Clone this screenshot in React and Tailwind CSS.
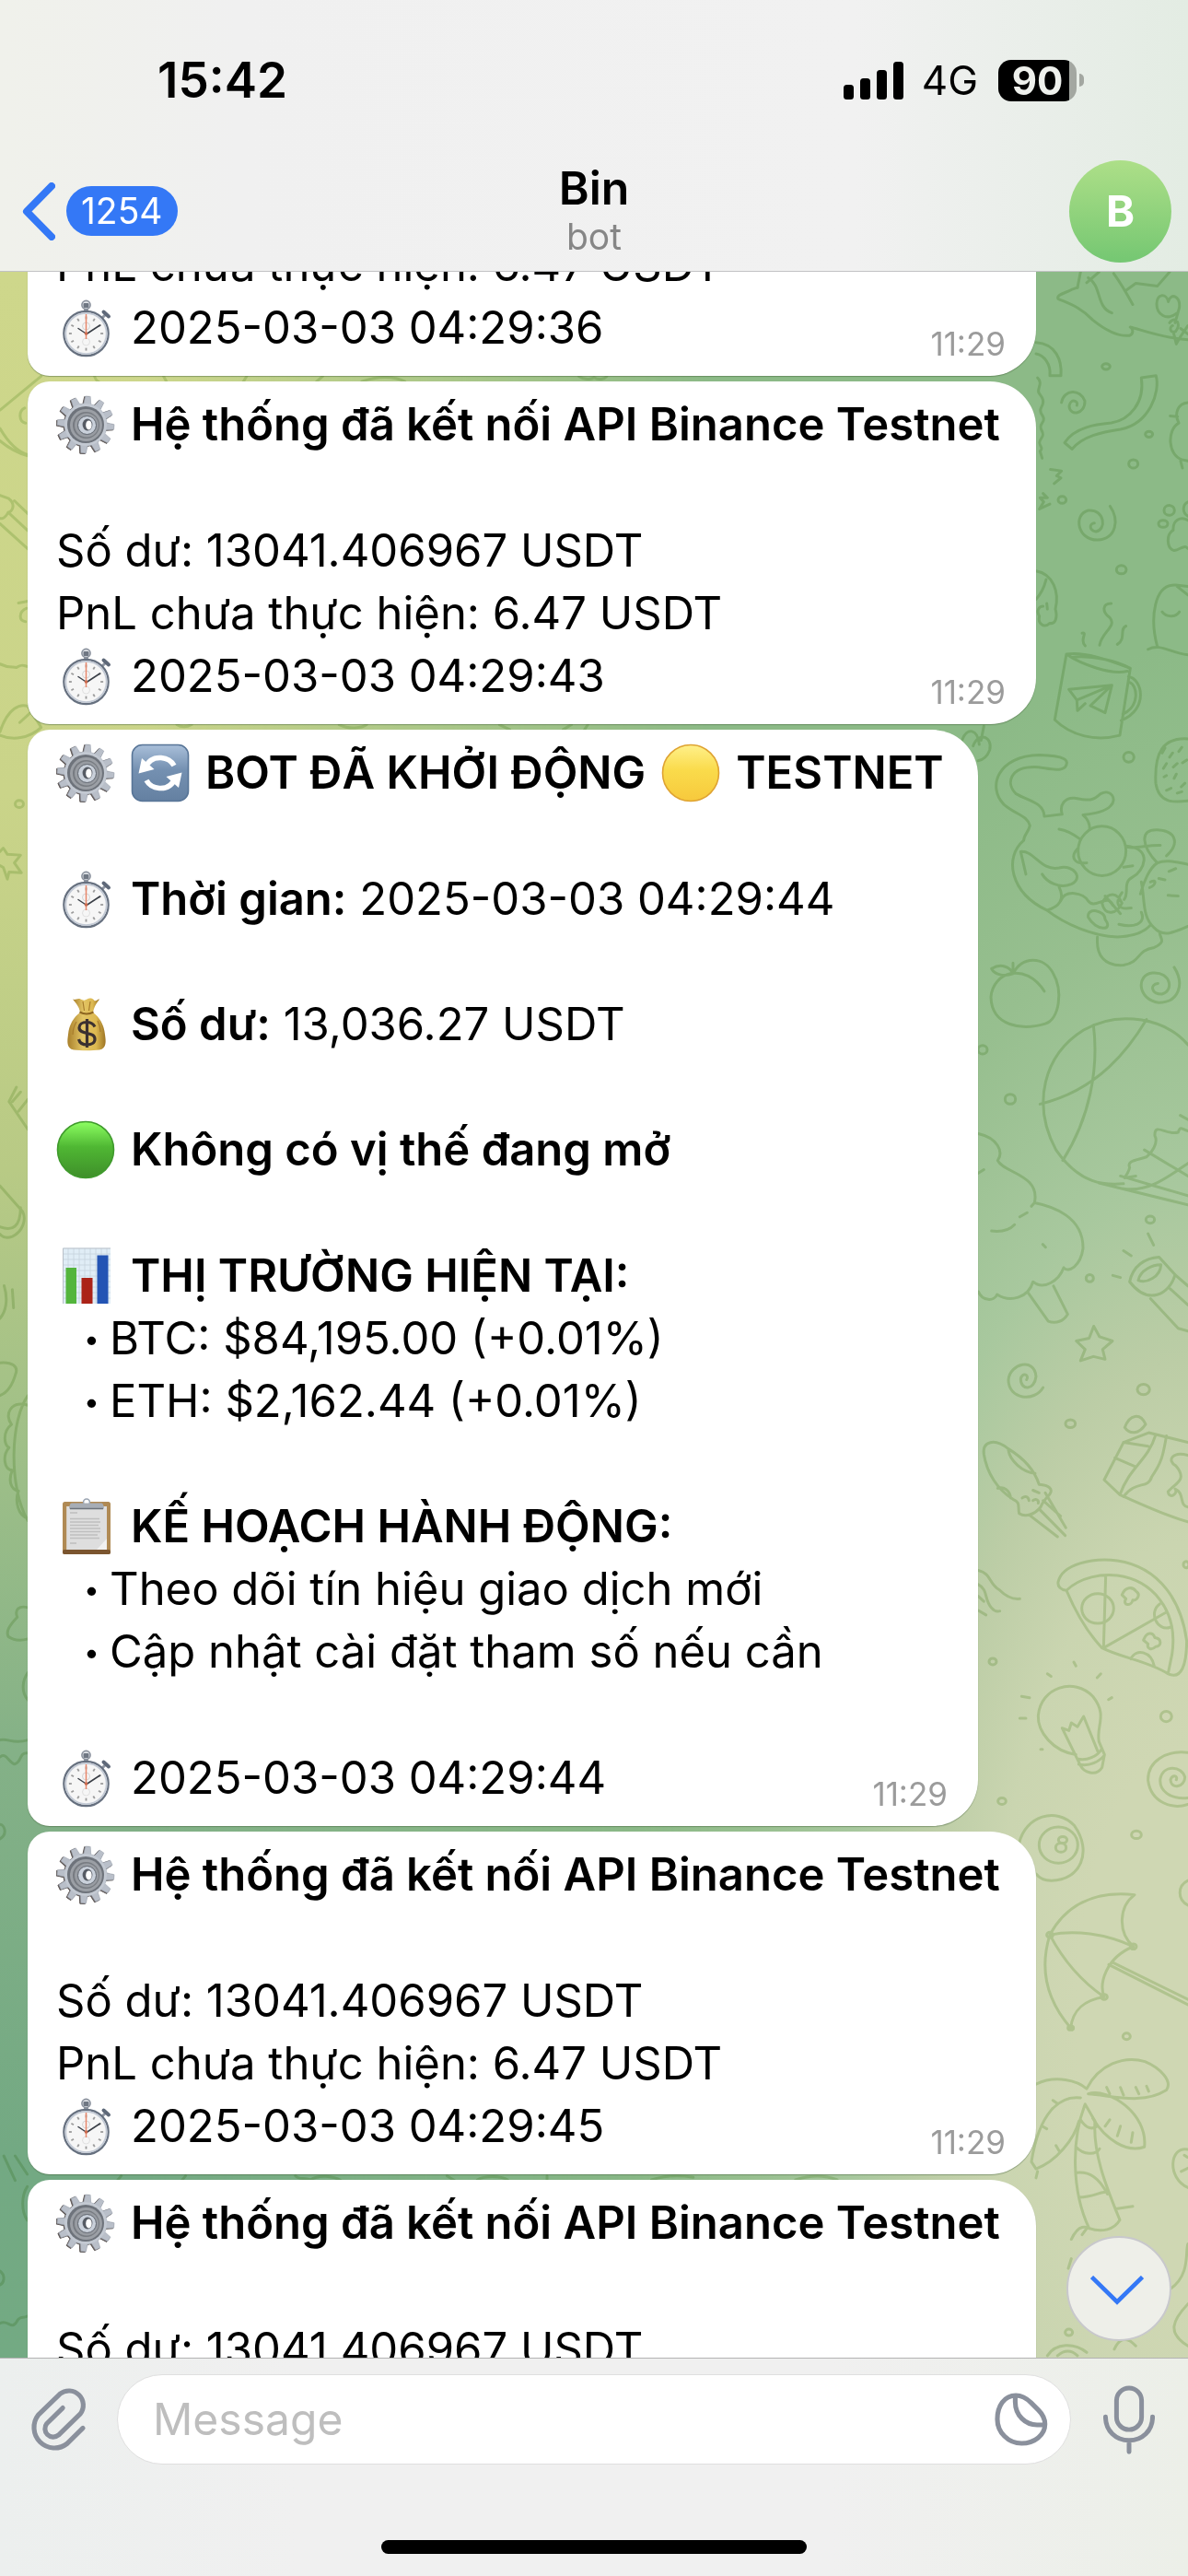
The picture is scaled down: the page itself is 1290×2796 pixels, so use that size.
import { useLayoutEffect, useRef } from "react";

/* ---------- emoji drawings ---------- */

const GEAR_PATH = (() => {
  const teeth = 12;
  const points = [];
  for (let i = 0; i < teeth; i++) {
    const a = (i / teeth) * Math.PI * 2 + 0.08;
    [
      [-0.17, 23],
      [-0.09, 31],
      [0.09, 31],
      [0.17, 23],
    ].forEach(([d, r]) => {
      points.push(`${(32 + Math.sin(a + d) * r).toFixed(1)} ${(32 - Math.cos(a + d) * r).toFixed(1)}`);
    });
  }
  return `M${points.join("L")}Z`;
})();

function EmojiBox({ label, children }) {
  return (
    <svg role="img" aria-label={label} viewBox="0 0 64 64" className="size-16 shrink-0">
      {children}
    </svg>
  );
}

function Gear() {
  return (
    <EmojiBox label="gear">
      <path d={GEAR_PATH} fill="#5d5654" stroke="#5d5654" strokeWidth="1" transform="translate(-1 0.6)" />
      <path d={GEAR_PATH} fill="#b9bfc9" stroke="#9aa1ad" strokeWidth="0.6" strokeLinejoin="round" />
      <circle cx="32" cy="32" r="23" fill="#c3c9d2" />
      <circle cx="32" cy="32" r="20" fill="#6e737b" />
      <circle cx="32.5" cy="32.5" r="17.5" fill="#9b9fa5" />
      <circle cx="32.5" cy="32.5" r="14.5" fill="#777b81" />
      <circle cx="33" cy="32.5" r="13" fill="#989ca2" />
      <circle cx="33.5" cy="32.5" r="10" fill="#c9d0da" stroke="#5f656e" strokeWidth="1" />
      <ellipse cx="34" cy="32" rx="5.4" ry="6.4" fill="#565b64" />
      <ellipse cx="35.4" cy="32.4" rx="3.2" ry="5" fill="#ffffff" />
    </EmojiBox>
  );
}

const WATCH_TICKS = Array.from({ length: 12 }, (_, i) => i * 30);

function Stopwatch() {
  return (
    <EmojiBox label="stopwatch">
      <rect x="30" y="8" width="5" height="8" fill="#8f96a1" />
      <circle cx="32.5" cy="7" r="4.6" fill="#e4e7eb" stroke="#8a919d" strokeWidth="1.6" />
      <rect x="29.5" y="5" width="6" height="5" rx="1" fill="#6f7783" />
      <path d="M49 22l5-5" stroke="#8f96a1" strokeWidth="3" />
      <path d="M51.5 14.5l5.5 5" stroke="#5f6979" strokeWidth="4" strokeLinecap="round" />
      <circle cx="32.5" cy="38" r="24.2" fill="#f6f6f6" stroke="#66707f" strokeWidth="2.2" />
      <circle cx="32.5" cy="38" r="22.2" fill="none" stroke="#c3cad5" strokeWidth="1.8" />
      {WATCH_TICKS.map((t) => (
        <path key={t} d="M32.5 19.4v3" stroke="#9b9b9b" strokeWidth="1.8" transform={`rotate(${t} 32.5 38)`} />
      ))}
      <circle cx="32.5" cy="30" r="4" fill="none" stroke="#d4d4d4" strokeWidth="1" />
      <circle cx="32.5" cy="47" r="4" fill="none" stroke="#e0e0e0" strokeWidth="1" />
      <path d="M33 38.5l-9-6M33 38.5l14.5-9.5" stroke="#3a3f47" strokeWidth="1.5" strokeLinecap="round" />
      <path d="M32.5 44V17" stroke="#e8876b" strokeWidth="1.5" />
      <circle cx="32.5" cy="38" r="1.8" fill="#c9694d" />
    </EmojiBox>
  );
}

function Refresh() {
  return (
    <EmojiBox label="refresh">
      <defs>
        <linearGradient id="refresh-face" x1="0" y1="0" x2="0" y2="1">
          <stop offset="0" stopColor="#a9bfd9" />
          <stop offset="0.45" stopColor="#7490b1" />
          <stop offset="1" stopColor="#6480a1" />
        </linearGradient>
      </defs>
      <rect x="1.5" y="1.5" width="61" height="61" rx="11" fill="url(#refresh-face)" stroke="#587597" strokeWidth="1.6" />
      <path d="M15.5 27C19 18 26 15 33 15.5C39 16 44 18.5 47 24" fill="none" stroke="#fff" strokeWidth="5.6" />
      <path d="M48.5 37C45 46 38 49 31 48.5C25 48 20 45.5 17 40" fill="none" stroke="#fff" strokeWidth="5.6" />
      <path d="M8.5 32.5L12 16l13.500 12z" fill="#fff" />
      <path d="M55.5 31.5L52 48L38.5 36z" fill="#fff" />
    </EmojiBox>
  );
}

function Ball({ label, id, top, middle, bottom, edge }) {
  return (
    <EmojiBox label={label}>
      <defs>
        <linearGradient id={id} x1="0" y1="0" x2="0" y2="1">
          <stop offset="0" stopColor={top} />
          <stop offset="0.45" stopColor={middle} />
          <stop offset="1" stopColor={bottom} />
        </linearGradient>
      </defs>
      <circle cx="32" cy="32" r="30.5" fill={`url(#${id})`} stroke={edge} strokeWidth="1.6" />
    </EmojiBox>
  );
}

function MoneyBag() {
  return (
    <EmojiBox label="money bag">
      <defs>
        <linearGradient id="bag-cloth" x1="0" y1="0" x2="1" y2="0">
          <stop offset="0" stopColor="#a9802b" />
          <stop offset="0.4" stopColor="#e3c565" />
          <stop offset="0.75" stopColor="#dcb850" />
          <stop offset="1" stopColor="#9d7424" />
        </linearGradient>
      </defs>
      <path d="M18 4.5C21 6 23 3 26.5 4.5S31 6 33.5 4.5S39 3 41 5.5S45 4 47 4.5C44.5 8.5 41.5 11 40 19H26C25 12 21 8.5 18 4.5Z" fill="url(#bag-cloth)" />
      <path d="M26 19H40C47 24 52 32 53 43C54 50 55 58 47 59.5C40 60.5 26 60.5 19 59.5C11 58 12 50 13 43C14 32 19 24 26 19Z" fill="url(#bag-cloth)" />
      <path d="M25.5 18.5Q33 22.5 40.5 18.5" fill="none" stroke="#8d6520" strokeWidth="2" />
      <path d="M29 7l1.5 10M37 7l-1.5 10M22 29c-3 5-4 10-4 14M45 28c2 4 3 8 3 12" fill="none" stroke="#a77c2c" strokeWidth="1.2" />
      <path d="M42 34.5C40 30.5 37 29.5 33 29.5C28 29.5 25 32 25 35.5C25 39.5 29 40.5 33.5 41.5S42 43.5 42 48C42 52 38 54 33.5 54C28.5 54 25.5 52 24.5 48M33.5 26V57" fill="none" stroke="#3b3130" strokeWidth="3.2" />
    </EmojiBox>
  );
}

function BarChart() {
  return (
    <EmojiBox label="bar chart">
      <rect x="7" y="1.5" width="52" height="60.5" fill="#e0edf6" />
      <path d="M13 2V62M19 2V62M25 2V62M31 2V62M37 2V62M43 2V62M49 2V62M55 2V62M7 8H59M7 14H59M7 20H59M7 26H59M7 32H59M7 38H59M7 44H59M7 50H59M7 56H59" stroke="#c6d3de" strokeWidth="0.8" />
      <path d="M7.5 62V2H59" fill="none" stroke="#b9c0c8" />
      <rect x="10.5" y="23" width="11.5" height="39" fill="#53b53c" />
      <rect x="27.5" y="34" width="12" height="28" fill="#ab2318" />
      <rect x="44.5" y="9.5" width="12" height="52.5" fill="#2354b4" />
    </EmojiBox>
  );
}

function Clipboard() {
  return (
    <EmojiBox label="clipboard">
      <rect x="7" y="5" width="52" height="57" rx="2.5" fill="#b08a54" />
      <rect x="7" y="57" width="52" height="5" rx="2" fill="#7b552f" />
      <path d="M11.5 10H55V57H11.5z" fill="#f1f1f1" />
      <path d="M11.5 10H55V45L44 57H11.5z" fill="#dedede" />
      <path d="M15 17h8M15 23.5h32M15 27h33M15 30.5h31M15 34h33M15 37.5h33M15 41h30M15 44.5h32M15 50h7" stroke="#bfbfbf" strokeWidth="1.4" />
      <circle cx="33" cy="5.5" r="3.4" fill="#fff" stroke="#9aa4b1" strokeWidth="1.5" />
      <path d="M17 6.5H49C51.5 6.5 52 11.5 52 12.5H14C14 11.5 14.5 6.5 17 6.5Z" fill="#a7adb5" />
      <path d="M15 12.5H51" stroke="#6d737b" strokeWidth="1.6" />
    </EmojiBox>
  );
}

/* ---------- wallpaper ---------- */

function Dots({ items }) {
  return items.map(([x, y, rx, ry]) => <ellipse key={`${x}-${y}`} cx={x} cy={y} rx={rx} ry={ry} vectorEffect="non-scaling-stroke" />);
}

function Doodle({ d }) {
  return <path d={d} vectorEffect="non-scaling-stroke" />;
}

function Wallpaper() {
  return (
    <div aria-hidden="true" className="absolute inset-0 overflow-hidden bg-[radial-gradient(47%_66%_at_100%_84%,#cfd7b3_0%,#cfd7b3_20%,#cad5b0_35%,#bccda6_48%,#a8c89e_61%,#97bf8f_80%,#8cba87_100%)]">
      <div className="absolute inset-0 bg-[linear-gradient(to_bottom,#ced78b_0%,#cad489_25%,#b8ca85_43%,#9cbe88_58%,#84b187_71%,#73a983_90%,#73aa83_100%)] [mask-image:linear-gradient(to_right,black_12%,transparent_60%)]" />
      <svg viewBox="0 295 1290 2264" preserveAspectRatio="xMaxYMin slice" className="absolute inset-0 size-full mix-blend-multiply" fill="none" stroke="#d9e7cb" strokeWidth="3" strokeLinecap="round" strokeLinejoin="round">
        <g transform="translate(1000 280) scale(0.3333 0.7653)">
          <Doodle d="M510 42L490 45C470 50 440 52 447 58C490 66 520 70 560 88C600 102 640 112 680 110C695 107 690 100 682 98C720 102 780 113 870 116" />
          <Doodle d="M520 20L510 42M545 28C590 40 570 70 622 78M540 35L580 20M628 22C650 35 670 50 690 66M668 46L700 36L770 40L810 20" />
          <Doodle d="M835 78C800 90 768 80 768 65C770 50 800 50 806 62C815 48 845 55 842 70L828 92M810 92C830 80 850 95 830 104C812 108 808 98 820 96M824 108L832 122L845 112L870 96M846 100L870 108" />
          <Doodle d="M375 120C440 122 460 145 456 167L420 167C424 150 400 138 375 136" />
          <Doodle d="M380 170C400 178 375 186 385 192S405 202 392 212S412 224 395 234S410 246 392 256S405 268 388 274L395 284" />
          <Doodle d="M458 205C465 186 520 185 534 203C535 222 485 225 483 210C488 198 515 203 508 209" />
          <Doodle d="M718 170L766 167C780 190 745 235 650 243C590 247 530 252 492 271L468 262C500 240 570 236 620 234C680 230 730 205 718 170Z" />
          <Doodle d="M422 300L458 302L442 309L456 312L434 320M398 334L412 340L388 340L400 346L386 356L420 349" />
          <Doodle d="M870 205C835 206 825 222 840 234C800 244 805 280 850 286L870 288M812 224L836 225M846 288L852 298" />
          <Doodle d="M616 352C645 370 640 398 575 400C510 400 495 364 545 358C600 356 605 386 570 388C545 386 550 376 565 376" />
          <Doodle d="M870 372C845 366 820 372 822 386C798 392 800 412 825 415C845 414 855 406 870 412M870 346C850 350 852 362 870 366" />
          <Doodle d="M375 444C430 448 452 474 438 498C445 508 440 520 420 518C400 526 380 518 386 508C375 500 385 494 398 494M408 456C400 470 388 478 375 484M410 490L412 498" />
          <Doodle d="M770 551C745 510 760 462 830 464L870 466M740 555C780 546 810 560 870 563M786 502C800 510 830 510 842 502M835 466L870 478" />
          <Doodle d="M474 562L436 655C490 678 570 686 648 677L682 582C620 572 540 558 474 562ZM474 562C520 576 620 592 672 586M495 566C560 563 640 572 682 582M676 594C720 596 745 640 652 656M680 602C705 606 715 635 658 647" />
          <Doodle d="M482 612L622 606L600 645L552 635L622 606L508 627L482 612M508 627L510 642L535 632M525 532C545 530 515 542 535 550M620 490C590 490 590 502 615 510C640 522 590 530 582 549M668 522C645 526 670 540 640 548" />
          <Doodle d="M135 683C150 665 185 668 190 690M170 692C190 670 235 680 224 698C215 708 200 712 186 713M205 664L196 684" />
          <Doodle d="M470 722C450 730 400 722 370 722C290 722 275 745 310 760C350 770 400 772 402 792L460 789C450 775 470 765 500 766C550 770 560 770 585 760C620 752 640 768 618 777C600 786 560 788 528 790C545 796 550 804 550 810M470 722C485 712 470 706 385 705C250 706 215 750 270 775C310 790 345 790 355 805C350 815 335 818 335 826C270 850 290 900 410 925C470 945 560 962 640 963C700 962 730 955 748 946" />
          <Doodle d="M342 874L325 842C370 840 390 870 450 865C500 860 530 880 490 888C450 895 410 885 395 874M450 892C470 910 450 920 412 925M450 810C480 812 500 818 518 824M668 834C680 840 740 832 780 833M668 834C760 838 725 870 690 878C655 886 680 900 662 910M455 912C470 895 530 900 545 912C565 925 610 900 625 918" />
          <ellipse cx="590" cy="841" rx="78" ry="35" vectorEffect="non-scaling-stroke" />
          <Doodle d="M510 838C485 850 500 860 540 858M660 864L690 862M590 915C610 898 640 900 655 915C640 930 600 935 590 915ZM600 905L650 930M655 900C630 915 640 925 685 922M545 935C540 920 600 925 600 938C630 955 570 955 545 935ZM645 945C690 950 735 945 718 928M715 902C725 885 745 865 770 858C720 835 710 810 770 811C830 812 845 830 800 848M718 885C730 910 720 935 760 950C790 965 830 955 870 948M748 885C770 880 765 890 745 893M775 880L795 882M805 904L838 905M770 858C800 852 840 858 870 860M808 870L830 866" />
          <Doodle d="M575 963C570 990 600 1005 660 1003C720 998 700 982 760 978C800 970 780 965 778 958" />
          <Doodle d="M870 682C790 680 760 700 765 745C775 775 830 772 870 770M795 695L786 702M820 702L810 708M850 694L840 700M800 717L790 724M835 717L822 722M866 712L852 716M800 734L792 736M832 732L825 738M815 752L800 755M860 745L848 750M850 757L835 759" />
          <Doodle d="M230 1008C260 1000 290 1005 300 1015C270 1020 240 1016 230 1008M300 1000V1015C330 990 400 990 430 1014C465 1040 450 1080 405 1086C330 1096 230 1090 228 1048C235 1012 340 998 402 1040" />
          <Doodle d="M825 1006C860 1030 840 1056 775 1056C705 1052 700 1016 755 1014C815 1012 825 1040 785 1044C750 1044 745 1030 772 1029" />
          <Doodle d="M870 1116C800 1080 650 1065 530 1095C400 1130 360 1200 440 1265C520 1315 600 1315 660 1313M562 1088C580 1150 550 1220 462 1280M735 1080C680 1120 580 1180 388 1200M650 1302L870 1330M580 1312L870 1343M870 1222L845 1216M870 1238C850 1236 845 1230 838 1240C800 1245 760 1225 762 1245C775 1255 750 1270 735 1275C700 1280 670 1280 680 1290C670 1308 640 1306 700 1302M728 1265L870 1302M870 1284C800 1305 740 1325 660 1320" />
          <Doodle d="M187 1242C250 1248 270 1268 250 1280C270 1298 390 1300 370 1340C430 1345 530 1360 528 1405C520 1430 480 1440 465 1432C450 1450 400 1465 365 1452C350 1475 290 1482 248 1470C240 1480 200 1480 187 1466M187 1298L205 1293M230 1380C270 1382 290 1378 305 1371M322 1360L346 1354M370 1340L360 1345M397 1399L406 1403M348 1467L415 1508C440 1512 465 1508 478 1498L432 1458" />
          <Doodle d="M680 1452C690 1430 730 1418 776 1417L828 1442C810 1470 740 1486 680 1452ZM708 1450C715 1435 755 1428 782 1428C780 1445 735 1455 708 1450ZM748 1476L838 1518L870 1522M828 1442L870 1458M812 1462L870 1485M740 1384L758 1400M660 1408L685 1415M625 1443L650 1446" />
          <Doodle d="M563 1515L582 1530L624 1536L592 1548L600 1562L562 1558L520 1564L535 1548L506 1536L548 1532Z" />
          <Dots items={[[603, 154, 13, 4], [743, 250, 12, 4], [692, 292, 15, 6], [460, 343, 13, 5], [653, 442, 16, 6], [677, 708, 17, 7], [201, 1123, 15, 6], [291, 1193, 17, 7], [747, 1364, 14, 5], [550, 1447, 12, 5], [809, 358, 17, 7], [789, 377, 15, 5]]} />
        </g>
        <g transform="translate(1000 1480) scale(0.3333 0.7015)">
          <Doodle d="M398 37C370 60 285 56 285 25C290 0 370 -10 375 20C370 42 325 42 325 24C330 12 355 18 344 25" />
          <Doodle d="M205 140C200 120 240 115 285 132C340 148 370 165 385 187C420 188 430 195 420 202C400 212 395 215 390 222C370 234 340 238 320 232C315 220 325 215 300 210C250 195 215 170 205 140ZM285 134C290 150 330 168 372 170M250 193C270 190 290 196 292 208M330 208C340 204 350 206 352 212M365 212C375 208 385 212 382 216M365 196L385 200M398 212L455 236M405 200L472 254M385 225L470 266M355 235L445 268" />
          <Doodle d="M664 99C680 78 715 76 732 94C710 110 680 110 664 99ZM870 122L742 107L660 122L597 180L648 203C720 218 800 236 870 245M648 203C680 160 740 150 765 110M660 206C700 180 740 195 752 175C790 150 790 135 800 112M660 122L740 128M632 146L700 160M870 142C820 135 800 150 830 158C870 180 830 185 805 198C810 212 840 200 828 194C860 200 840 220 870 222" />
          <Doodle d="M187 320C230 325 220 340 255 350C280 362 300 365 322 364M187 342C220 350 205 365 230 378C240 384 250 384 257 383M187 360L205 368M187 382L212 389" />
          <Doodle d="M447 338C460 310 560 300 640 305C780 315 850 370 866 430C865 465 850 490 805 480C740 460 650 455 590 440C540 415 500 380 474 351C455 350 445 345 447 338ZM474 351C520 330 590 325 640 328C750 335 840 380 818 450L805 480M602 328L595 440M595 440L795 386M684 457C700 440 750 445 760 468" />
          <ellipse cx="576" cy="379" rx="52" ry="23" vectorEffect="non-scaling-stroke" />
          <Doodle d="M655 358C665 345 690 345 700 352C720 358 700 368 690 366C685 376 655 375 668 364ZM725 428C735 415 755 415 762 424C785 425 785 438 765 438C750 445 735 440 740 434ZM812 408C770 415 740 385 778 372" />
          <Doodle d="M505 605C430 600 380 570 382 545C390 500 500 485 560 515C610 545 570 560 580 585L598 605L590 625C570 640 530 632 520 622L460 564L482 568L490 556L510 562L530 546L576 600M512 612C540 615 575 608 588 597M514 620C550 624 580 616 598 606" />
          <Doodle d="M328 515L354 517M322 549L342 549M412 480L424 484M498 462L505 468M574 486L586 480M611 520L622 517M390 597L396 597" />
          <Doodle d="M320 742C340 700 440 685 500 715C560 755 520 800 425 800C400 800 385 796 376 790" />
          <ellipse cx="448" cy="745" rx="63" ry="28" vectorEffect="non-scaling-stroke" />
          <ellipse cx="462" cy="737" rx="14" ry="5" vectorEffect="non-scaling-stroke" />
          <ellipse cx="456" cy="749" rx="17" ry="7" vectorEffect="non-scaling-stroke" />
          <Doodle d="M870 602C800 598 738 615 740 645C750 680 820 690 870 682M870 672C810 675 775 660 780 642C790 620 850 622 860 640C860 655 815 660 813 644C820 635 838 638 832 644" />
          <Doodle d="M696 822C560 815 470 840 420 884C390 930 400 980 488 1028C495 1000 530 985 597 980C580 960 600 920 692 902C640 880 645 840 696 822ZM420 884C500 876 600 882 692 902M420 884C460 920 520 955 597 980M612 930L870 992M622 926L870 984" />
          <Doodle d="M375 1115C440 1100 510 1110 540 1122C580 1085 660 1070 730 1080C780 1090 820 1110 800 1124C720 1148 620 1132 545 1130C610 1120 740 1160 728 1212C670 1222 600 1200 560 1168M520 1136C450 1132 385 1160 360 1235L375 1246C440 1235 500 1200 515 1172" />
          <Doodle d="M535 1146C490 1200 490 1280 548 1338C590 1345 630 1340 648 1325C600 1270 560 1220 567 1172ZM520 1170C540 1185 560 1185 575 1180M505 1212C530 1225 570 1225 582 1215M508 1252C550 1250 580 1260 608 1285M515 1290C560 1290 590 1280 605 1282M690 1304L635 1308M490 1355C520 1325 550 1340 548 1338M525 1348L545 1335M430 1140L445 1145M395 1180L410 1184M440 1210L450 1218M605 1120L615 1130M650 1120L660 1132M700 1120L710 1130M735 1118L742 1126M600 1180L615 1170M640 1195L650 1180M685 1205L690 1190" />
          <Doodle d="M870 800C835 808 835 830 870 838M870 1216C810 1210 800 1260 870 1275M858 1225L868 1228M848 1250L870 1245M870 1362C860 1372 880 1410 812 1432M870 1455C820 1480 800 1500 870 1520M700 1520C660 1500 640 1515 630 1525M412 1535C440 1515 500 1515 540 1530M445 1535C470 1525 490 1526 510 1535M480 1400L490 1385M375 1260L380 1250" />
          <Dots items={[[725, 40, 20, 8], [487, 93, 16, 6], [864, 311, 9, 5], [234, 461, 12, 5], [799, 546, 18, 8], [264, 677, 13, 5], [702, 729, 16, 6], [670, 1041, 12, 5], [482, 1499, 12, 5], [420, 884, 10, 4], [692, 902, 10, 4], [597, 980, 10, 4], [488, 1028, 9, 3]]} />
        </g>
        <g transform="translate(0 400) scale(0.4464 0.3827)">
          <Doodle d="M0 118L100 22M0 170C20 210 40 235 68 245M0 205C25 230 45 240 68 248M60 112C45 120 45 150 62 155M0 360L20 368C40 385 30 405 20 408C10 430 0 425 0 425M35 375L68 412M20 408L68 460M0 440L68 512M68 660L45 665M65 680C45 690 45 715 62 718M0 838C20 850 30 845 40 848C55 835 60 845 68 845M0 1030C20 960 50 950 68 958C75 975 95 1005 100 1018C70 1050 30 1055 0 1040M48 1004L75 975M0 1370L8 1360L18 1378L50 1380L35 1402L52 1430L22 1428L18 1448L8 1415L0 1410" />
          <Doodle d="M230 22C232 30 236 36 240 37M398 22L405 37M600 22L592 37M785 22L770 37M880 37C920 20 960 22 985 37M1408 22C1420 32 1440 32 1445 25C1455 34 1470 30 1476 22M430 1010C440 1018 455 1018 466 1010M825 1010C850 1024 880 1020 892 1010M1215 1010L1240 1024M1390 1010L1370 1024M1430 1010L1422 1024" />
          <Dots items={[[47, 1235, 10, 10]]} />
        </g>
        <g transform="translate(0 1180) scale(0.4464 0.523)">
          <Doodle d="M40 0L22 30L68 88M30 30L50 10M45 50L68 25M0 205L55 258C65 275 55 300 30 310C15 315 5 310 0 305M50 250C50 290 30 300 0 290M10 412C20 440 15 465 0 480M30 420L33 458M0 572C30 570 45 580 38 595C30 620 15 635 0 640M68 660C25 650 10 680 28 700C5 715 10 745 22 748C5 765 10 795 30 795C20 815 25 835 45 838C35 860 45 890 68 895M68 640C25 690 20 830 68 900M68 1080C45 1075 35 1085 42 1100C20 1120 15 1130 20 1140C35 1150 55 1148 68 1145M68 1215C55 1230 50 1255 68 1272M0 1355C20 1350 30 1365 68 1355M0 1390C15 1380 20 1400 35 1405C55 1400 45 1380 68 1382M0 1530C10 1530 20 1550 0 1560" />
        </g>
        <g transform="translate(0 2340) scale(0.8227 0.3333)">
          <Doodle d="M5 0L20 80M20 0L36 60M36 100C28 130 28 180 36 210M0 375C8 390 5 415 0 420M0 545C10 530 15 570 22 540C26 520 30 530 36 522M160 65L155 80M245 65L240 80M390 65C395 78 400 70 410 78C420 60 440 65 450 80M590 65L600 80M630 78C640 64 660 64 670 78M722 65V80M860 78C880 62 900 64 915 70M1050 78C1070 62 1090 64 1105 78" />
        </g>
      </svg>
    </div>
  );
}

/* ---------- messages ---------- */

function Row({ children }) {
  return <div className="flex min-h-[68px] items-center gap-[17px]">{children}</div>;
}

function Bubble({ wide = true, time, last, children }) {
  return (
    <article
      className={`${wide ? "w-[1095px]" : "w-[1032px]"} max-w-full rounded-l-3xl rounded-r-[50px] bg-white px-[31px] pt-[13px] pb-[18px] shadow-[0_1px_1px_rgba(60,90,50,0.45)]`}
    >
      {children}
      <div className="flex items-end justify-between">
        <Row>
          <Stopwatch />
          <span>{last}</span>
        </Row>
        <time className="pr-[2px] text-[35px] leading-[34px] text-[#9b9b9b]">{time}</time>
      </div>
    </article>
  );
}

function StatusBubble({ stamp }) {
  return (
    <Bubble last={stamp} time="11:29">
      <Row>
        <Gear />
        <strong className="font-semibold whitespace-nowrap">Hệ thống đã kết nối API Binance Testnet</strong>
      </Row>
      <p className="mt-[69px]">Số dư: 13041.406967 USDT</p>
      <p>PnL chưa thực hiện: 6.47 USDT</p>
    </Bubble>
  );
}

function BulletList({ items }) {
  return (
    <ul>
      {items.map((item) => (
        <li key={item} className="flex pl-[30px]">
          <span className="w-7 shrink-0 text-[30px]">•</span>
          {item}
        </li>
      ))}
    </ul>
  );
}

function StartupBubble() {
  return (
    <Bubble wide={false} last="2025-03-03 04:29:44" time="11:29">
      <Row>
        <Gear />
        <Refresh />
        <strong className="font-semibold">BOT ĐÃ KHỞI ĐỘNG</strong>
        <Ball label="yellow circle" id="ball-yellow" top="#fff08a" middle="#fadb4b" bottom="#f7c93c" edge="#dfa332" />
        <strong className="font-semibold">TESTNET</strong>
      </Row>
      <div className="mt-[69px]">
        <Row>
          <Stopwatch />
          <p>
            <strong className="font-semibold">Thời gian:</strong> 2025-03-03 04:29:44
          </p>
        </Row>
      </div>
      <div className="mt-[68px]">
        <Row>
          <MoneyBag />
          <p>
            <strong className="font-semibold">Số dư:</strong> 13,036.27 USDT
          </p>
        </Row>
      </div>
      <div className="mt-[68px]">
        <Row>
          <Ball label="green circle" id="ball-green" top="#8dff62" middle="#4fb733" bottom="#3f8f2a" edge="#3f9a2c" />
          <strong className="font-semibold">Không có vị thế đang mở</strong>
        </Row>
      </div>
      <div className="mt-[69px]">
        <Row>
          <BarChart />
          <strong className="font-semibold">THỊ TRƯỜNG HIỆN TẠI:</strong>
        </Row>
        <BulletList items={["BTC: $84,195.00 (+0.01%)", "ETH: $2,162.44 (+0.01%)"]} />
      </div>
      <div className="mt-[68px] mb-[69px]">
        <Row>
          <Clipboard />
          <strong className="font-semibold">KẾ HOẠCH HÀNH ĐỘNG:</strong>
        </Row>
        <BulletList items={["Theo dõi tín hiệu giao dịch mới", "Cập nhật cài đặt tham số nếu cần"]} />
      </div>
    </Bubble>
  );
}

/* ---------- bars ---------- */

function StatusBar() {
  return (
    <div className="flex h-[162px] items-center justify-between pt-3 pr-[113px] pl-[171px]">
      <span className="text-[53px] leading-[64px] font-semibold">15:42</span>
      <div className="flex items-center">
        <svg role="img" aria-label="Signal" viewBox="0 0 65 41" className="h-[41px] w-[65px]">
          <rect x="0" y="25" width="11" height="16" rx="3.5" />
          <rect x="18" y="18" width="11" height="23" rx="3.5" />
          <rect x="36" y="9" width="11" height="32" rx="3.5" />
          <rect x="54" y="0" width="11" height="41" rx="3.5" />
        </svg>
        <span className="ml-5 text-[44px] leading-[54px]">4G</span>
        <div className="ml-[22px] flex items-center gap-[3px]">
          <div className="flex h-[45px] w-[85px] items-center justify-center rounded-[14px] bg-[linear-gradient(to_right,#000_77px,#a3a7a1_77px)] text-[42px] leading-[45px] font-bold text-[#eef0ec]">
            90
          </div>
          <div className="h-[14px] w-[5px] rounded-r-full bg-[#a3a7a1]" />
        </div>
      </div>
    </div>
  );
}

function NavBar() {
  return (
    <div className="grid h-[132px] grid-cols-[1fr_auto_1fr] items-center px-[18px] pt-[2px]">
      <button type="button" aria-label="Back, 1254 unread" className="flex items-center gap-3 justify-self-start pl-1.5">
        <svg viewBox="0 0 36 63" className="h-[63px] w-9" fill="none" stroke="#3478f6" strokeWidth="8" strokeLinecap="round" strokeLinejoin="round">
          <path d="M32 4L5 31.5L32 59" />
        </svg>
        <span className="rounded-full bg-[#3478f6] px-4 text-[39px] leading-[54px] text-white">1254</span>
      </button>
      <div className="text-center">
        <h1 className="text-[50px] leading-[56px] font-semibold">Bin</h1>
        <p className="text-[39px] leading-[50px] text-[#868686]">bot</p>
      </div>
      <button type="button" aria-label="Bin profile" className="flex size-[111px] items-center justify-center justify-self-end rounded-full bg-linear-to-b from-[#addf88] to-[#74c772] text-[47px] leading-[60px] font-bold text-white">
        B
      </button>
    </div>
  );
}

function Composer() {
  return (
    <footer className="relative shrink-0 border-t border-[#b2b2b2] bg-[linear-gradient(to_right,#ecefee_0%,#f0f0f0_25%,#f0f0f0_70%,#ecefe8_100%)] pt-[17px] pb-6">
      <form className="flex items-center pr-9 pl-8" onSubmit={(e) => e.preventDefault()}>
        <button type="button" aria-label="Attach">
          <svg viewBox="98 151 188 214" className="h-[71px] w-[63px]" fill="none" stroke="#8a909c" strokeWidth="15.5" strokeLinecap="round" strokeLinejoin="round">
            <path d="M206 219L154 270A27 27 0 0 0 192 308L263 239A47 47 0 0 0 197 173L126 242A67 67 0 0 0 220 336L272 285" />
          </svg>
        </button>
        <div className="mr-[35px] ml-8 flex h-[98px] min-w-0 flex-1 items-center rounded-full border border-[#dfdfdf] bg-white pr-6 pl-[38px]">
          <input aria-label="Message" placeholder="Message" className="min-w-0 flex-1 bg-transparent text-[48px] leading-[60px] outline-none placeholder:text-[#bebebe]" />
          <button type="button" aria-label="Stickers">
            <svg viewBox="121 530 174 176" className="size-[58px]" fill="none" stroke="#8a909c" strokeWidth="15.5" strokeLinejoin="round">
              <path d="M190 539C152 539 129 574 129 617C129 661 165 697 209 697C252 697 286 669 286 634C286 612 276 599 265 588L240 563C224 547 208 539 190 539Z" />
              <path d="M188 540V560C188 605 222 637 262 636H286" />
            </svg>
          </button>
        </div>
        <button type="button" aria-label="Record voice message">
          <svg viewBox="474 506 168 226" className="h-[75px] w-14" fill="none" stroke="#8a909c" strokeWidth="15" strokeLinecap="round">
            <rect x="517" y="515" width="82" height="136" rx="41" />
            <path d="M481 609C481 655 515 686 558 686S635 655 635 609M558 686V724" />
          </svg>
        </button>
      </form>
      <div className="mx-auto mt-[82px] h-[15px] w-[462px] rounded-full bg-black" />
    </footer>
  );
}

export default function App() {
  const scroller = useRef(null);

  useLayoutEffect(() => {
    scroller.current.scrollTop = 259;
  }, []);

  return (
    <div className="flex h-screen flex-col overflow-hidden bg-[#f0f0f0] font-['Inter',sans-serif] text-[49px] leading-[68px] text-black">
      <header className="shrink-0 border-b border-[#c2c2c4] bg-[linear-gradient(to_right,#f0f1eb_0%,#f0f0f0_20%,#f1f1f1_72%,#e3ece3_100%)]">
        <StatusBar />
        <NavBar />
      </header>
      <main className="relative min-h-0 flex-1">
        <Wallpaper />
        <div ref={scroller} className="relative flex h-full flex-col gap-1.5 overflow-y-auto pr-6 pl-[30px] [scrollbar-width:none] [&>article]:shrink-0">
          <StatusBubble stamp="2025-03-03 04:29:36" />
          <StatusBubble stamp="2025-03-03 04:29:43" />
          <StartupBubble />
          <StatusBubble stamp="2025-03-03 04:29:45" />
          <StatusBubble stamp="2025-03-03 04:29:46" />
        </div>
        <button type="button" aria-label="Scroll to latest message" className="absolute right-[18px] bottom-[18px] flex size-[114px] items-center justify-center rounded-full border-2 border-[#c8c8cc] bg-[#eeefe9]">
          <svg viewBox="0 0 58 32" className="mt-1 -ml-1 h-8 w-[58px]" fill="none" stroke="#3478f6" strokeWidth="4.6">
            <path d="M1.5 1.5L29 28.5L56.5 1.5" />
          </svg>
        </button>
      </main>
      <Composer />
    </div>
  );
}
